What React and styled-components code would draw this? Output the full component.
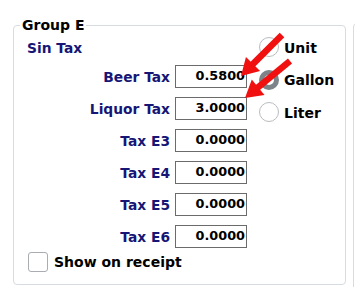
import React from "react";
import styled, { createGlobalStyle } from "styled-components";

const Global = createGlobalStyle`
  html, body { margin: 0; padding: 0; background: #ffffff; }
  body { overflow: hidden; font-family: "DejaVu Sans", Verdana, sans-serif; }
  #root { width: 355px; height: 287px; }
`;

const Page = styled.div`
  position: relative;
  width: 355px;
  height: 287px;
  display: flex;
  align-items: flex-start;
  gap: 7px;
  padding: 25px 0 0 13px;
  box-sizing: border-box;
  overflow: hidden;
`;

const Frame = styled.div`
  position: relative;
  flex: none;
  width: 333px;
  height: 260px;
  box-sizing: border-box;
  border: 1px solid #d6dce1;
  border-radius: 4px;
  padding: 10px 0 0 13px;
`;

const SideFrame = styled.div`
  flex: none;
  width: 40px;
  height: 300px;
  margin-top: -2px;
  border: 1px solid #d6dce1;
  border-radius: 4px;
`;

const Title = styled.span`
  position: absolute;
  top: -10px;
  left: 6px;
  padding: 0 2px;
  background: #ffffff;
  font-weight: bold;
  font-size: 14px;
  line-height: 18px;
  color: #000000;
`;

const Top = styled.div`
  display: flex;
  align-items: flex-start;
`;

const LeftCol = styled.div`
  display: flex;
  flex-direction: column;
`;

const Heading = styled.div`
  margin-top: 4px;
  font-weight: bold;
  font-size: 13.8px;
  line-height: 17px;
  color: #161676;
`;

const Rows = styled.div`
  margin-top: 8px;
  display: grid;
  grid-template-columns: 143px 72px;
  grid-auto-rows: 23px;
  column-gap: 5px;
  row-gap: 9px;
  align-items: center;
`;

const Label = styled.label`
  justify-self: end;
  font-weight: bold;
  font-size: 13.8px;
  line-height: 17px;
  padding-top: 2px;
  color: #161676;
  white-space: nowrap;
`;

const NumBox = styled.div`
  height: 23px;
  box-sizing: border-box;
  border: 1px solid #6b6b6b;
  background: #ffffff;
  text-align: right;
  padding: 2px 1px 0 0;
  font-weight: bold;
  font-size: 12.8px;
  line-height: 15px;
  color: #000000;
`;

const RadioCol = styled.div`
  margin-left: 12px;
  padding-top: 1px;
  display: flex;
  flex-direction: column;
  gap: 12.5px;
`;

const RadioRow = styled.div`
  display: flex;
  align-items: center;
  gap: 5px;
  height: 20px;
`;

const Circle = styled.span`
  width: 20px;
  height: 20px;
  box-sizing: border-box;
  border-radius: 50%;
  background: #ffffff;
  border: ${(p) => (p.$on ? "5px solid #7c848a" : "1px solid #b9bcbf")};
`;

const OptText = styled.span`
  font-weight: bold;
  font-size: 14px;
  line-height: 17px;
  padding-top: 2px;
  color: #000000;
`;

const CheckRow = styled.div`
  margin: 4px 0 0 1px;
  display: flex;
  align-items: center;
  gap: 6px;
`;

const Box = styled.span`
  width: 20px;
  height: 20px;
  box-sizing: border-box;
  border: 1px solid #a9adb1;
  border-radius: 3px;
  background: #ffffff;
`;

const CheckText = styled.span`
  font-weight: bold;
  font-size: 14px;
  line-height: 17px;
  padding-top: 1px;
  color: #000000;
`;

const Overlay = styled.svg`
  position: absolute;
  left: 0;
  top: 0;
  pointer-events: none;
`;

const rows = [
  ["Beer Tax", "0.5800"],
  ["Liquor Tax", "3.0000"],
  ["Tax E3", "0.0000"],
  ["Tax E4", "0.0000"],
  ["Tax E5", "0.0000"],
  ["Tax E6", "0.0000"],
];

const opts = [
  ["Unit", false],
  ["Gallon", true],
  ["Liter", false],
];

function Arrow({ x1, y1, x2, y2 }) {
  const dx = x2 - x1;
  const dy = y2 - y1;
  const len = Math.hypot(dx, dy);
  const ux = dx / len;
  const uy = dy / len;
  const hl = 17;
  const hw = 10;
  const bx = x2 - ux * hl;
  const by = y2 - uy * hl;
  const px = -uy * hw;
  const py = ux * hw;
  return (
    <g fill="#f01010" stroke="none">
      <line x1={x1} y1={y1} x2={bx + ux * 2} y2={by + uy * 2} stroke="#f01010" strokeWidth="6.5" />
      <polygon points={`${x2},${y2} ${bx + px},${by + py} ${bx - px},${by - py}`} />
    </g>
  );
}

export default function App() {
  return (
    <>
      <Global />
      <Page>
        <Frame>
          <Title>Group E</Title>
          <Top>
            <LeftCol>
              <Heading>Sin Tax</Heading>
              <Rows>
                {rows.map(([l, v]) => (
                  <React.Fragment key={l}>
                    <Label>{l}</Label>
                    <NumBox>{v}</NumBox>
                  </React.Fragment>
                ))}
              </Rows>
            </LeftCol>
            <RadioCol>
              {opts.map(([t, on]) => (
                <RadioRow key={t}>
                  <Circle $on={on} />
                  <OptText>{t}</OptText>
                </RadioRow>
              ))}
            </RadioCol>
          </Top>
          <CheckRow>
            <Box />
            <CheckText>Show on receipt</CheckText>
          </CheckRow>
        </Frame>
        <SideFrame />
        <Overlay width="355" height="287" viewBox="0 0 355 287">
          <Arrow x1={282} y1={35} x2={241} y2={76} />
          <Arrow x1={290} y1={61} x2={245} y2={98} />
        </Overlay>
      </Page>
    </>
  );
}
